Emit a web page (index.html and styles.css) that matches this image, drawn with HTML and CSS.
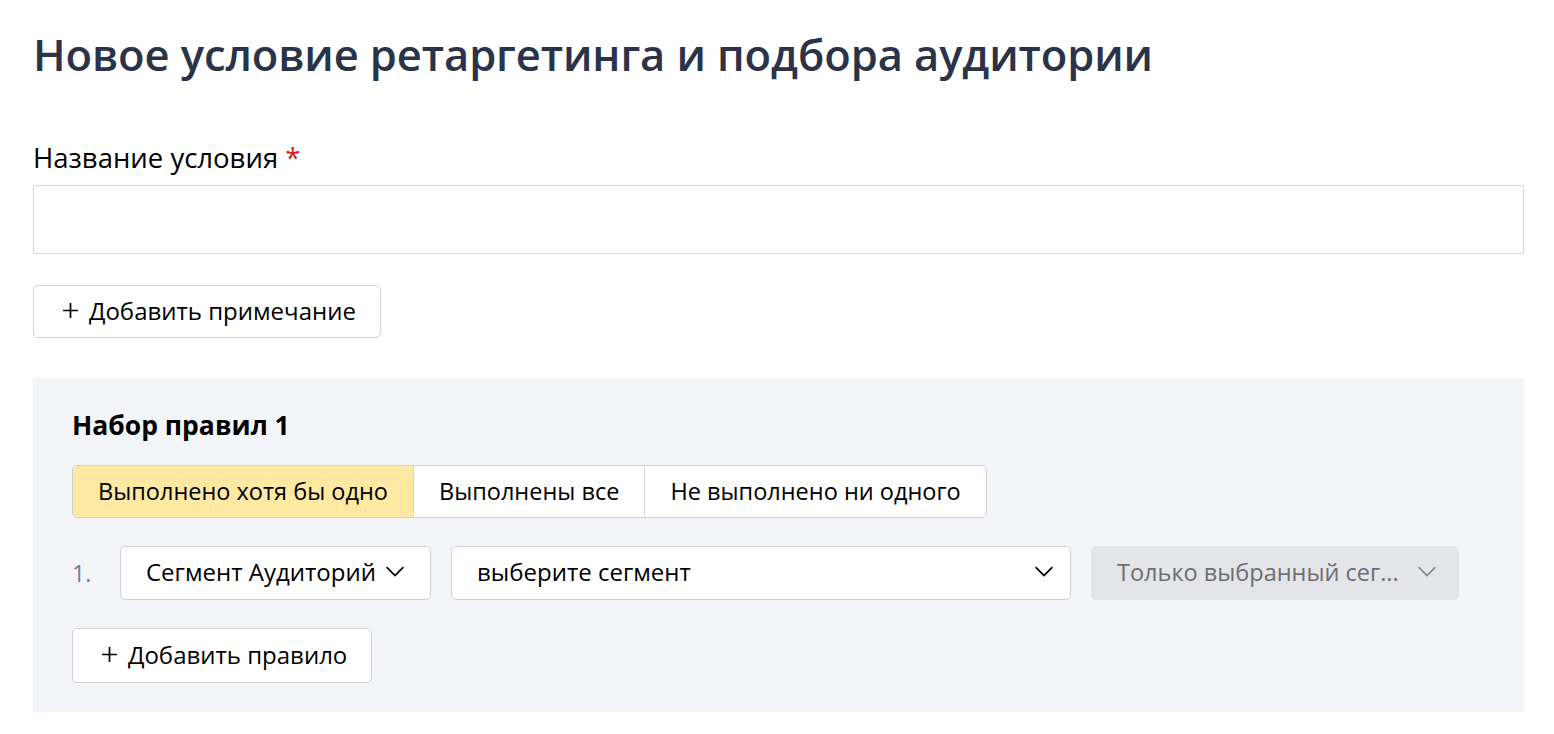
FILE: index.html
```html
<!DOCTYPE html>
<html>
<head>
<meta charset="utf-8">
<title>Новое условие ретаргетинга и подбора аудитории</title>
<link rel="stylesheet" href="styles.css">
</head>
<body>
<div class="page">
  <h1 class="title">Новое условие ретаргетинга и подбора аудитории</h1>

  <div class="field">
    <label class="label">Название условия <span class="req">*</span></label>
    <input class="input" type="text">
  </div>

  <button class="btn">
    <svg class="plus" viewBox="0 0 16 16" width="16" height="16"><path d="M8 1v14M1 8h14" stroke="#000" stroke-width="1.6"/></svg>
    Добавить примечание
  </button>

  <div class="ruleset">
    <div class="ruleset-title">Набор правил 1</div>

    <div class="segmented">
      <span class="seg seg-active">Выполнено хотя бы одно</span>
      <span class="seg">Выполнены все</span>
      <span class="seg">Не выполнено ни одного</span>
    </div>

    <div class="rule">
      <span class="num">1.</span>
      <div class="select sel-type">Сегмент Аудиторий
        <svg class="chev" viewBox="0 0 16 10" width="16" height="10"><path d="M1 1l7 7 7-7" fill="none" stroke="#000" stroke-width="1.4"/></svg>
      </div>
      <div class="select sel-seg">выберите сегмент
        <svg class="chev" viewBox="0 0 16 10" width="16" height="10"><path d="M1 1l7 7 7-7" fill="none" stroke="#000" stroke-width="1.4"/></svg>
      </div>
      <div class="select sel-disabled">Только выбранный сег...
        <svg class="chev" viewBox="0 0 16 10" width="16" height="10"><path d="M1 1l7 7 7-7" fill="none" stroke="#888" stroke-width="1.4"/></svg>
      </div>
    </div>

    <button class="btn btn-rule">
      <svg class="plus" viewBox="0 0 16 16" width="16" height="16"><path d="M8 1v14M1 8h14" stroke="#000" stroke-width="1.6"/></svg>
      Добавить правило
    </button>
  </div>
</div>
</body>
</html>
```

FILE: styles.css
```css
body {
  margin: 0;
  background: #fff;
  font-family: "Open Sans", "Liberation Sans", Arial, sans-serif;
  color: #000;
}

.page {
  padding: 27px 30px 0 33px;
  width: 1491px;
}

.title {
  margin: 0;
  font-size: 43.5px;
  font-weight: 600;
  color: #2a3347;
  line-height: 56px;
  letter-spacing: -0.1px;
}

.field {
  margin-top: 59px;
}

.label {
  display: block;
  font-size: 27.5px;
  line-height: 32px;
  margin-bottom: 11px;
}

.req {
  color: #e0161a;
}

.input {
  display: block;
  box-sizing: border-box;
  width: 1491px;
  height: 69px;
  border: 1px solid #d5d5d8;
  border-radius: 2px;
  margin: 0;
}

.btn {
  display: flex;
  align-items: center;
  gap: 10px;
  box-sizing: border-box;
  height: 53px;
  margin-top: 31px;
  padding: 0 24px 2px 28px;
  background: #fff;
  border: 1px solid #d0d1d4;
  border-radius: 5px;
  font-family: inherit;
  font-size: 24px;
  color: #000;
}

.plus {
  width: 17px;
  height: 17px;
}

.ruleset {
  margin-top: 40px;
  background: #f4f5f8;
  padding: 29px 39px 29px;
}

.ruleset-title {
  font-size: 26.5px;
  font-weight: 700;
  line-height: 36px;
}

.segmented {
  display: flex;
  margin-top: 22px;
  width: max-content;
  border: 1px solid #cfd0d4;
  border-radius: 5px;
  overflow: hidden;
  background: #fff;
}

.seg {
  display: flex;
  align-items: center;
  box-sizing: border-box;
  height: 51px;
  padding: 0 25px 2px;
  font-size: 23.5px;
  border-left: 1px solid #d6d7da;
}

.seg:first-child {
  border-left: none;
}

.seg-active {
  background: #fde9a2;
}

.rule {
  display: flex;
  align-items: center;
  gap: 20px;
  margin-top: 28px;
}

.num {
  width: 28px;
  font-size: 23px;
  color: #6f7c99;
}

.select {
  display: flex;
  align-items: center;
  gap: 9px;
  box-sizing: border-box;
  height: 54px;
  padding: 0 16px 3px 25px;
  background: #fff;
  border: 1px solid #d0d1d4;
  border-radius: 5px;
  font-size: 24px;
  white-space: nowrap;
}

.sel-type {
  width: 311px;
}

.sel-seg {
  width: 620px;
  justify-content: space-between;
}

.sel-disabled {
  width: 368px;
  gap: 18px;
  font-size: 23.5px;
  background: #e4e5e9;
  border-color: #e4e5e9;
  color: #6e6e72;
}

.chev {
  width: 20px;
  height: 12px;
  flex-shrink: 0;
}

.btn-rule {
  height: 55px;
  margin-top: 28px;
}
```
